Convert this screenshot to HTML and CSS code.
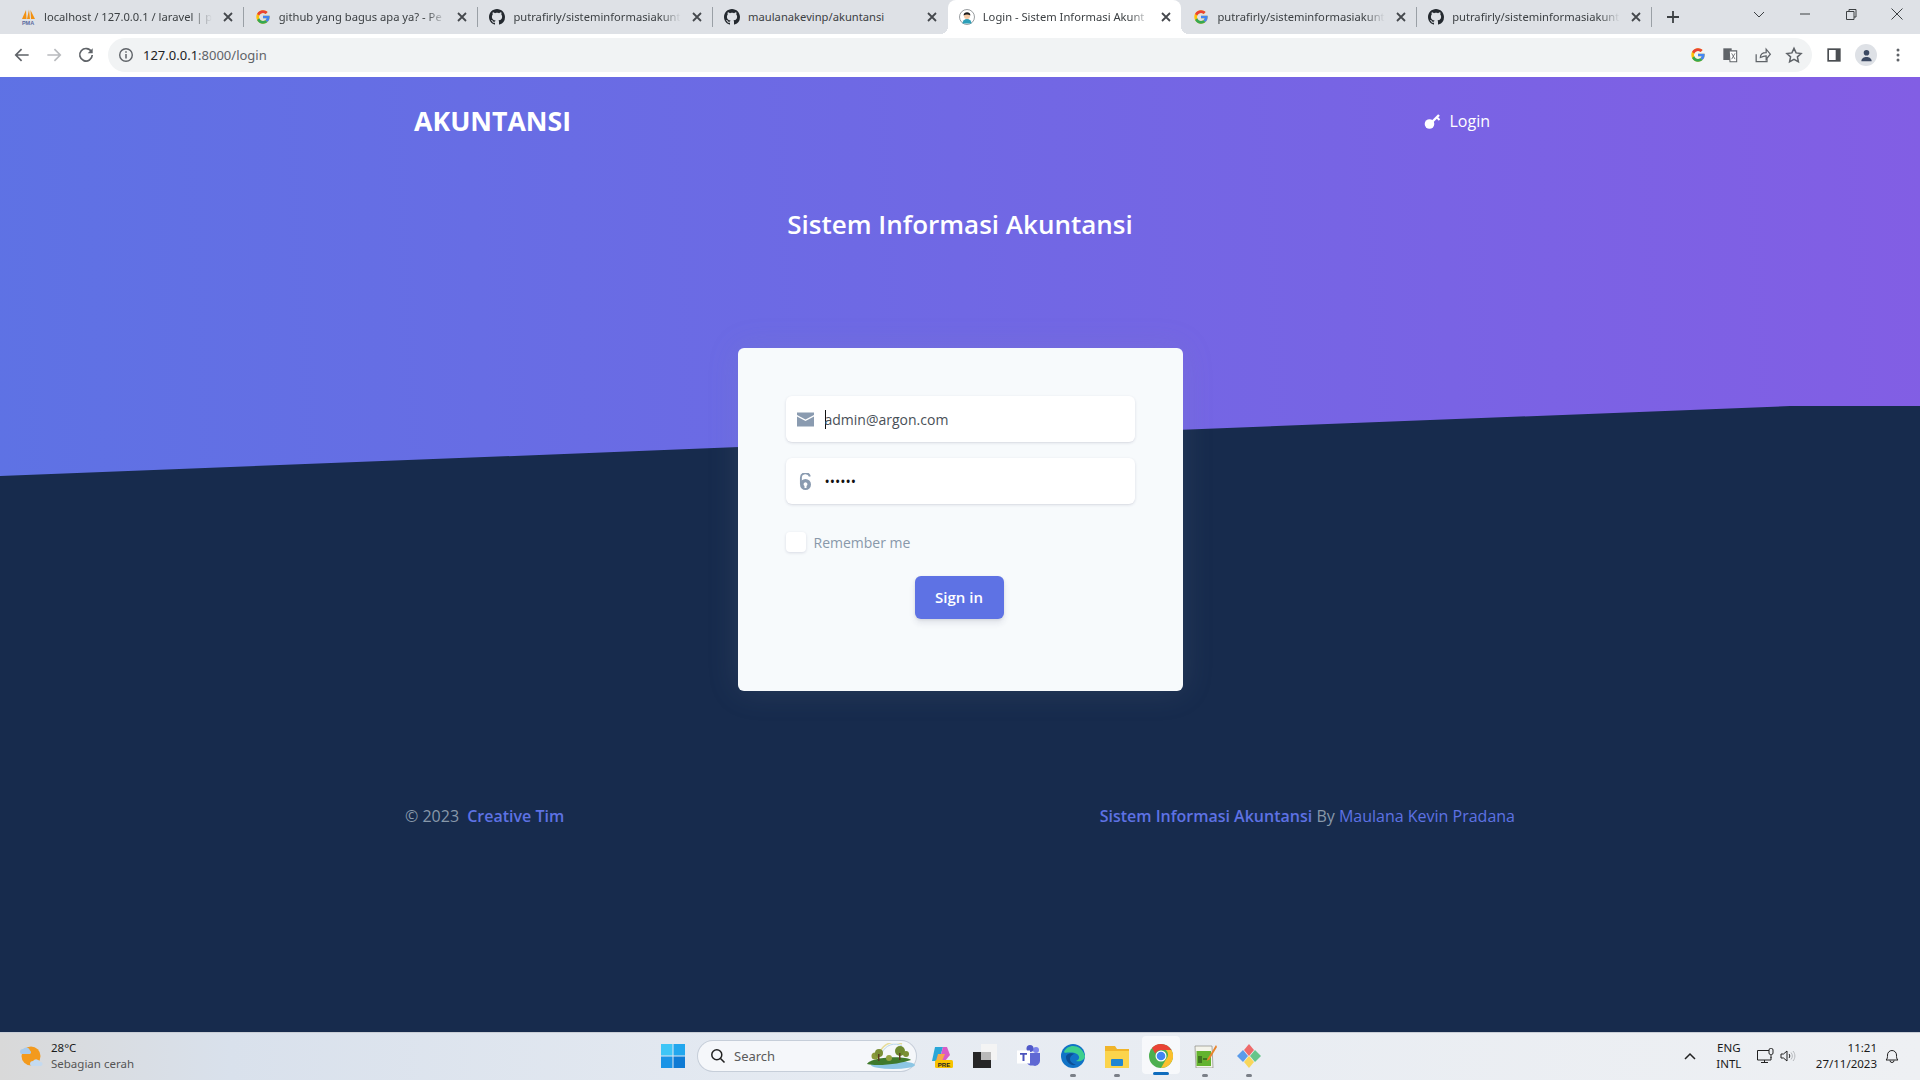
FILE: index.html
```html
<!DOCTYPE html>
<html lang="en">
<head>
    <meta charset="UTF-8">
    <title>Login - Sistem Informasi Akuntansi</title>
    <link rel="stylesheet" href="styles.css">
</head>
<body>
    <svg class="icon-defs" xmlns="http://www.w3.org/2000/svg">
        <symbol id="g-logo" viewBox="0 0 48 48">
            <path fill="#FFC107" d="M43.6 20.5H42V20H24v8h11.3c-1.6 4.7-6.1 8-11.3 8-6.6 0-12-5.4-12-12s5.4-12 12-12c3.1 0 5.8 1.2 8 3l5.7-5.7C34 6.1 29.3 4 24 4 13 4 4 13 4 24s9 20 20 20 20-9 20-20c0-1.3-.1-2.4-.4-3.5z"/>
            <path fill="#EA4335" d="M6.3 14.7l6.6 4.8C14.7 15.1 19 12 24 12c3.1 0 5.8 1.2 8 3l5.7-5.7C34 6.1 29.3 4 24 4 16.3 4 9.7 8.3 6.3 14.7z"/>
            <path fill="#34A853" d="M24 44c5.2 0 9.9-2 13.4-5.2l-6.2-5.2C29.2 35.1 26.7 36 24 36c-5.2 0-9.6-3.3-11.3-8l-6.5 5C9.5 39.6 16.2 44 24 44z"/>
            <path fill="#4285F4" d="M43.6 20.5H42V20H24v8h11.3c-.8 2.2-2.2 4.2-4.1 5.6l6.2 5.2C37 39.2 44 34 44 24c0-1.3-.1-2.4-.4-3.5z"/>
        </symbol>
        <symbol id="github" viewBox="0 0 16 16">
            <path fill="#24292f" d="M8 0C3.58 0 0 3.58 0 8c0 3.54 2.29 6.53 5.47 7.59.4.07.55-.17.55-.38 0-.19-.01-.82-.01-1.49-2.01.37-2.53-.49-2.69-.94-.09-.23-.48-.94-.82-1.13-.28-.15-.68-.52-.01-.53.63-.01 1.08.58 1.23.82.72 1.21 1.87.87 2.33.66.07-.52.28-.87.51-1.07-1.78-.2-3.64-.89-3.64-3.95 0-.87.31-1.59.82-2.15-.08-.2-.36-1.02.08-2.12 0 0 .67-.21 2.2.82.64-.18 1.32-.27 2-.27s1.36.09 2 .27c1.53-1.04 2.2-.82 2.2-.82.44 1.1.16 1.92.08 2.12.51.56.82 1.27.82 2.15 0 3.07-1.87 3.75-3.65 3.95.29.25.54.73.54 1.48 0 1.07-.01 1.93-.01 2.2 0 .21.15.46.55.38A8.01 8.01 0 0 0 16 8c0-4.42-3.58-8-8-8z"/>
        </symbol>
        <symbol id="tab-close" viewBox="0 0 16 16">
            <path d="M4 4l8 8M12 4l-8 8" fill="none" stroke="#45484d" stroke-width="1.8"/>
        </symbol>
    </svg>

    <div class="browser">
        <div class="tab-strip">
            <div class="tab">
                <svg class="favicon" viewBox="0 0 16 16">
                    <path d="M2 10L6 1l.5 9zM7 10l2-9.500 1 9.500zM10.500 1l4.500 9h-4z" fill="#f29111"/>
                    <text class="pma-text" x="8" y="15.500">PMA</text>
                </svg>
                <span class="tab-title">localhost / 127.0.0.1 / laravel | p</span>
                <svg class="tab-x"><use href="#tab-close"/></svg>
            </div>
            <span class="tab-sep"></span>
            <div class="tab">
                <svg class="favicon"><use href="#g-logo"/></svg>
                <span class="tab-title">github yang bagus apa ya? - Pe</span>
                <svg class="tab-x"><use href="#tab-close"/></svg>
            </div>
            <span class="tab-sep"></span>
            <div class="tab">
                <svg class="favicon"><use href="#github"/></svg>
                <span class="tab-title">putrafirly/sisteminformasiakunt</span>
                <svg class="tab-x"><use href="#tab-close"/></svg>
            </div>
            <span class="tab-sep"></span>
            <div class="tab">
                <svg class="favicon"><use href="#github"/></svg>
                <span class="tab-title no-fade">maulanakevinp/akuntansi</span>
                <svg class="tab-x"><use href="#tab-close"/></svg>
            </div>
            <span class="tab-sep hidden"></span>
            <div class="tab active">
                <svg class="favicon" viewBox="0 0 16 16">
                    <circle cx="8" cy="8" r="7.500" fill="#fff" stroke="#6f7478" stroke-width=".7"/>
                    <path d="M3.500 14.500a4.500 4.500 0 0 1 9 0z" fill="#2c9fb8"/>
                    <circle cx="8" cy="7" r="3" fill="#f3c9a5"/>
                    <path d="M4.600 6.500C4.400 2.200 11.600 2 11.400 6.500 9.500 5 6.500 5 4.600 6.500z" fill="#1b1b1b"/>
                </svg>
                <span class="tab-title">Login - Sistem Informasi Akunt</span>
                <svg class="tab-x"><use href="#tab-close"/></svg>
            </div>
            <span class="tab-sep hidden"></span>
            <div class="tab">
                <svg class="favicon"><use href="#g-logo"/></svg>
                <span class="tab-title">putrafirly/sisteminformasiakunt</span>
                <svg class="tab-x"><use href="#tab-close"/></svg>
            </div>
            <span class="tab-sep"></span>
            <div class="tab">
                <svg class="favicon"><use href="#github"/></svg>
                <span class="tab-title">putrafirly/sisteminformasiakunt</span>
                <svg class="tab-x"><use href="#tab-close"/></svg>
            </div>
            <span class="tab-sep"></span>
            <svg class="new-tab" viewBox="0 0 16 16"><path d="M8 2v12M2 8h12" stroke="#3c4043" stroke-width="1.800"/></svg>
            <div class="window-controls">
                <svg class="win-btn" viewBox="0 0 16 16"><path d="M3 6l5 5 5-5" fill="none" stroke="#3c4043"/></svg>
                <svg class="win-btn" viewBox="0 0 16 16"><path d="M3 8h10" stroke="#3c4043"/></svg>
                <svg class="win-btn" viewBox="0 0 16 16"><path d="M3.500 5.500h7.500v8h-7.500zM6 5.500V3.500h7v7.500h-2" fill="none" stroke="#3c4043"/></svg>
                <svg class="win-btn" viewBox="0 0 16 16"><path d="M2.500 2.500l11 11M13.500 2.500l-11 11" stroke="#3c4043"/></svg>
            </div>
        </div>

        <div class="toolbar">
            <svg class="tool" viewBox="0 0 24 24"><path d="M20 12H5M11.500 5l-7 7 7 7" fill="none" stroke="#5f6368" stroke-width="2"/></svg>
            <svg class="tool" viewBox="0 0 24 24"><path d="M4 12h15M12.500 5l7 7-7 7" fill="none" stroke="#b9bbbe" stroke-width="2"/></svg>
            <svg class="tool" viewBox="0 0 24 24"><path d="M18.500 8A7.500 7.500 0 1 0 19.500 12" fill="none" stroke="#5f6368" stroke-width="2"/><path d="M20 4v6h-6z" fill="#5f6368"/></svg>
            <div class="address-bar">
                <svg class="info-icon" viewBox="0 0 16 16">
                    <circle cx="8" cy="8" r="6.300" fill="none" stroke="#5f6368" stroke-width="1.400"/>
                    <path d="M8 7v4.500M8 4.300v1.500" stroke="#5f6368" stroke-width="1.500"/>
                </svg>
                <span class="url">127.0.0.1<span class="url-rest">:8000/login</span></span>
                <svg class="tool"><use href="#g-logo" x="8" y="2" width="16" height="16"/></svg>
                <svg class="tool" viewBox="0 0 24 24">
                    <rect x="4" y="4" width="10" height="14" fill="#5f6368"/>
                    <path d="M11 7h9v13h-8z" fill="#fff" stroke="#5f6368" stroke-width="1.300"/>
                    <path d="M14 10l4 7M18 10l-4 7" stroke="#5f6368"/>
                </svg>
                <svg class="tool" viewBox="0 0 24 24"><path d="M5 11v9h13v-5M10 15c0-4 3-6 7-6V5l5 6-5 6v-4c-3 0-5 1-7 2z" fill="none" stroke="#5f6368" stroke-width="1.500"/></svg>
                <svg class="tool" viewBox="0 0 24 24"><path d="M12 4l2.500 5.500 6 .7-4.400 4 1.200 5.900L12 17.200 6.700 20.100l1.200-5.900-4.400-4 6-.7z" fill="none" stroke="#5f6368" stroke-width="1.800"/></svg>
            </div>
            <svg class="tool" viewBox="0 0 24 24"><rect x="4" y="4" width="16" height="16" fill="#4b4e52"/><rect x="6" y="6" width="8" height="12" fill="#fff"/></svg>
            <div class="profile-slot">
                <span class="profile">
                    <svg viewBox="0 0 16 16"><circle cx="8" cy="5" r="3" fill="#3c4a63"/><path d="M2.500 14c0-6 11-6 11 0z" fill="#3c4a63"/></svg>
                </span>
            </div>
            <svg class="tool" viewBox="0 0 24 24"><circle cx="12" cy="6" r="1.800" fill="#5f6368"/><circle cx="12" cy="12" r="1.800" fill="#5f6368"/><circle cx="12" cy="18" r="1.800" fill="#5f6368"/></svg>
        </div>
    </div>

    <main class="page">
        <nav class="navbar">
            <a class="brand">AKUNTANSI</a>
            <a class="nav-login">
                <svg class="key-icon" viewBox="0 0 18 18">
                    <circle cx="5.500" cy="12" r="4.800" fill="#fff"/>
                    <path d="M7.500 10.500L15 3" stroke="#fff" stroke-width="2.400"/>
                    <path d="M13 5.500l2.500 2.500" stroke="#fff" stroke-width="2"/>
                </svg>
                Login
            </a>
        </nav>

        <h1 class="title">Sistem Informasi Akuntansi</h1>

        <section class="login-card">
            <form class="login-form">
                <label class="field">
                    <svg class="field-icon" viewBox="0 0 17 14">
                        <path d="M0 0h17v2.500L8.500 7 0 2.500z" fill="#8a9bb0"/>
                        <path d="M0 4l8.500 4.500L17 4v10H0z" fill="#8a9bb0"/>
                    </svg>
                    <span class="caret"></span>
                    <input type="text" value="admin@argon.com">
                </label>
                <label class="field">
                    <svg class="field-icon" viewBox="0 0 17 17">
                        <path d="M3.900 11V4.800a4.600 4.600 0 0 1 9-1.300" fill="none" stroke="#8a9bb0" stroke-width="1.900"/>
                        <path fill-rule="evenodd" d="M8.500 6a5.500 5.500 0 1 1 0 11 5.500 5.500 0 0 1 0-11zM8.500 9.200a2 2 0 0 0-1 3.700V15h2v-2.100a2 2 0 0 0-1-3.700z" fill="#8a9bb0"/>
                    </svg>
                    <input class="password" type="password" value="secret">
                </label>
                <div class="remember">
                    <span class="checkbox"></span>
                    <span>Remember me</span>
                </div>
                <button type="button" class="btn-signin">Sign in</button>
            </form>
        </section>

        <footer class="footer">
            <div class="copyright">© 2023 <a class="footer-strong">Creative Tim</a></div>
            <div class="credit"><a class="footer-strong">Sistem Informasi Akuntansi</a> By <a class="footer-link">Maulana Kevin Pradana</a></div>
        </footer>
    </main>

    <div class="taskbar">
        <div class="weather">
            <svg class="weather-icon" viewBox="0 0 24 24">
                <circle cx="12" cy="12" r="9.500" fill="#f39a1d"/>
                <path d="M1 8a3 3 0 0 1 3-3 4 4 0 0 1 7 1.500A2 2 0 0 1 11 10H2.500A2 2 0 0 1 1 8z" fill="#a9cbec"/>
                <path d="M11 20a3 3 0 0 1 3-3 4 4 0 0 1 7 1 2 2 0 0 1 1 4H12.500A2 2 0 0 1 11 20z" fill="#c4daf0"/>
            </svg>
            <div class="weather-text">
                <span class="temp">28°C</span>
                <span class="sky">Sebagian cerah</span>
            </div>
        </div>

        <div class="task-center">
            <svg class="start" viewBox="0 0 24 24">
                <rect x="0" y="0" width="11.500" height="11.500" fill="#3ec6f7"/>
                <rect x="12.500" y="0" width="11.500" height="11.500" fill="#22a7ee"/>
                <rect x="0" y="12.500" width="11.500" height="11.500" fill="#1a94e6"/>
                <rect x="12.500" y="12.500" width="11.500" height="11.500" fill="#0f7bd4"/>
            </svg>
            <div class="search-pill">
                <svg class="search-icon" viewBox="0 0 16 16"><circle cx="6.800" cy="6.800" r="5" fill="none" stroke="#202020" stroke-width="1.500"/><path d="M10.500 10.500l4 4" stroke="#202020" stroke-width="1.600"/></svg>
                <span class="search-label">Search</span>
                <svg class="search-art" viewBox="0 0 49 26">
                    <path d="M14 9a16 16 0 0 1 22-8" fill="none" stroke="#e6dc9a" stroke-width="1.500"/>
                    <path d="M16 10a14 14 0 0 1 20-7" fill="none" stroke="#b9d6ea" stroke-width="1"/>
                    <ellipse cx="27" cy="22" rx="22" ry="4" fill="#8cc6e4"/>
                    <path d="M1 21c3-7 38-9 44-4-8 3-32 7-44 4z" fill="#3f7a2c"/>
                    <circle cx="9" cy="13" r="3.500" fill="#8a9a3a"/>
                    <circle cx="13" cy="10" r="4" fill="#7a8f35"/>
                    <circle cx="34" cy="8" r="5" fill="#6f8a30"/>
                    <circle cx="40" cy="11" r="3" fill="#7a8f35"/>
                    <circle cx="23" cy="15" r="3" fill="#93a23f"/>
                    <path d="M12 11h1.500v7H12zM33 10h1.500v7H33z" fill="#5b3c1e"/>
                </svg>
            </div>
            <div class="task-apps">
                <div class="task-app">
                    <svg viewBox="0 0 24 24">
                        <path d="M6 3h8l-4 14H3z" fill="#2aa7d8"/>
                        <path d="M14 3h4l3 8-5 6h-6z" fill="#d85bc7"/>
                        <path d="M9 10h7l-3 7H7z" fill="#f6a94a"/>
                        <rect x="6" y="16" width="18" height="8" rx="1.500" fill="#f8c300"/>
                        <text class="pre-text" x="15" y="22.500">PRE</text>
                    </svg>
                </div>
                <div class="task-app">
                    <svg viewBox="0 0 24 24">
                        <rect x="8" y="0" width="16" height="16" fill="#f4f4f4"/>
                        <rect x="0" y="8" width="18" height="16" fill="#262626"/>
                        <rect x="8" y="8" width="10" height="8" fill="#b9b9b9"/>
                    </svg>
                </div>
                <div class="task-app">
                    <svg viewBox="0 0 24 24">
                        <circle cx="19" cy="6" r="3" fill="#7b83eb"/>
                        <circle cx="13" cy="4.500" r="3.500" fill="#5059c9"/>
                        <path d="M8 9h15v8a5 5 0 0 1-7 4.500A6 6 0 0 1 9 17z" fill="#5f68d3"/>
                        <rect x="0" y="6.500" width="13" height="13" fill="#fff"/>
                        <path d="M3 9h7v1.800H7.500V17H5.500v-6.200H3z" fill="#4b53bc"/>
                    </svg>
                </div>
                <div class="task-app running">
                    <svg viewBox="0 0 24 24">
                        <circle cx="12" cy="12" r="12" fill="#1173c6"/>
                        <path d="M3 8C6 0 20-1 24 12c0 4-5 6-9 5 4-1 4-5 1-7C11 7 3 10 3 8z" fill="#3ecf8e"/>
                        <path d="M5 13c0 5 5 9 9 8 3-.5-5-1-5-6 0-3 3-5 5-5-4-2-9 0-9 3z" fill="#0c4f96"/>
                    </svg>
                </div>
                <div class="task-app running">
                    <svg viewBox="0 0 24 24">
                        <path d="M0 2h10l2 3h12v19H0z" fill="#f0b429"/>
                        <path d="M0 7h24v17H0z" fill="#fbd44c"/>
                        <rect x="6" y="15" width="12" height="7" rx="1" fill="#1f86d2"/>
                    </svg>
                </div>
                <div class="task-app active-app">
                    <svg viewBox="0 0 24 24">
                        <circle cx="12" cy="12" r="12" fill="#4caf50"/>
                        <path d="M12 0a12 12 0 0 1 10.400 6H12a6 6 0 0 0-5.600 3.700L3 3.900A12 12 0 0 1 12 0z" fill="#ea4335"/>
                        <path d="M22.400 6A12 12 0 0 1 12 24l5.200-9a6 6 0 0 0-.4-9z" fill="#fbc02d"/>
                        <circle cx="12" cy="12" r="5.500" fill="#fff"/>
                        <circle cx="12" cy="12" r="4.300" fill="#4285f4"/>
                    </svg>
                    <span class="active-mark"></span>
                </div>
                <div class="task-app running">
                    <svg viewBox="0 0 24 24">
                        <path d="M2 2h17l1 22H3z" fill="#f3f3ea" stroke="#7a7a70" stroke-width=".6"/>
                        <rect x="3.500" y="7" width="14.500" height="15" fill="#63b32e"/>
                        <path d="M6 12v7M8 12v7M10 15h4" stroke="#1f3a12"/>
                        <path d="M23 1l-8 13-1.500 3 3-1.500L24 3z" fill="#e8842c"/>
                    </svg>
                </div>
                <div class="task-app running">
                    <svg viewBox="0 0 24 24">
                        <path d="M12 0l5 6-5 6-5-6z" fill="#ee6a6a"/>
                        <path d="M18 6l6 6-6 6-5-6z" fill="#66c58a"/>
                        <path d="M6 6l5 6-5 6-6-6z" fill="#5a9bea"/>
                        <path d="M12 12l5 6-5 6-5-6z" fill="#f8d65a"/>
                    </svg>
                </div>
            </div>
        </div>

        <div class="tray">
            <svg class="tray-chevron" viewBox="0 0 12 8"><path d="M1 7l5-5 5 5" fill="none" stroke="#222" stroke-width="1.500"/></svg>
            <div class="lang"><span>ENG</span><span>INTL</span></div>
            <svg class="tray-net" viewBox="0 0 18 16">
                <path d="M12 2.500H.500v9.500H14V9M4 14.500h7M7.500 12v2.500" fill="none" stroke="#222"/>
                <rect x="12" y=".5" width="4" height="6" rx="1.500" fill="none" stroke="#222"/>
                <path d="M14 7v3" stroke="#222"/>
            </svg>
            <svg class="tray-sound" viewBox="0 0 16 14">
                <path d="M1 5h2.500L7 2v10L3.500 9H1z" fill="none" stroke="#222"/>
                <path d="M9 5c1 1 1 3 0 4" fill="none" stroke="#222"/>
                <path d="M11 3.500c1.800 2 1.800 5 0 7M13 2c2.500 3 2.500 7 0 10" fill="none" stroke="#b5b8bc"/>
            </svg>
            <div class="clock"><span>11:21</span><span>27/11/2023</span></div>
            <svg class="tray-bell" viewBox="0 0 14 16">
                <path d="M1 12c1.500-1 1.500-3 1.500-5a4.500 4.500 0 0 1 9 0c0 2 0 4 1.500 5zM5 12.500a2 2 0 0 0 4 0" fill="none" stroke="#222"/>
            </svg>
        </div>
    </div>
</body>
</html>
```

FILE: styles.css
```css
* {
    margin: 0;
    padding: 0;
    box-sizing: border-box;
}

html, body {
    height: 100%;
}

body {
    font-family: "Open Sans", sans-serif;
    display: flex;
    flex-direction: column;
    overflow: hidden;
}

.icon-defs {
    display: none;
}

/* browser chrome */
.browser {
    height: 77px;
    flex-shrink: 0;
    font-family: "Noto Sans", sans-serif;
}

.tab-strip {
    height: 34px;
    background: #dee1e6;
    display: flex;
    align-items: center;
    padding-left: 9px;
}

.tab {
    position: relative;
    width: 233.7px;
    height: 34px;
    display: flex;
    align-items: center;
    padding: 0 7px 0 11px;
    font-size: 11.2px;
    color: #3c4043;
}

.tab.active {
    background: #fff;
    border-radius: 8px 8px 0 0;
}

.tab.active::before,
.tab.active::after {
    content: "";
    position: absolute;
    bottom: 0;
    width: 8px;
    height: 8px;
}

.tab.active::before {
    left: -8px;
    background: radial-gradient(circle at 0 0, transparent 8px, #fff 8px);
}

.tab.active::after {
    right: -8px;
    background: radial-gradient(circle at 100% 0, transparent 8px, #fff 8px);
}

.favicon {
    width: 16px;
    height: 16px;
    flex-shrink: 0;
    margin-right: 8px;
}

.pma-text {
    font-family: "Liberation Sans", sans-serif;
    font-size: 5.5px;
    font-weight: 700;
    text-anchor: middle;
    fill: #5a6a9f;
}

.tab-title {
    flex: 1;
    padding-bottom: 1px;
    white-space: nowrap;
    overflow: hidden;
    -webkit-mask-image: linear-gradient(90deg, #000 88%, transparent 100%);
    mask-image: linear-gradient(90deg, #000 88%, transparent 100%);
}

.tab-title.no-fade {
    -webkit-mask-image: none;
    mask-image: none;
}

.tab-x {
    width: 16px;
    height: 16px;
    flex-shrink: 0;
    margin-left: 8px;
}

.tab-sep {
    width: 1px;
    height: 20px;
    background: #9aa0a6;
    flex-shrink: 0;
}

.tab-sep.hidden {
    visibility: hidden;
}

.new-tab {
    width: 16px;
    height: 16px;
    margin-left: 13px;
}

.window-controls {
    margin-left: auto;
    display: flex;
    align-items: center;
    padding-right: 15px;
    gap: 30px;
}

.win-btn {
    width: 16px;
    height: 16px;
    margin-bottom: 6px;
}

.toolbar {
    height: 43px;
    background: #fff;
    display: flex;
    align-items: center;
    padding: 0 6px 1px;
}

.tool {
    width: 32px;
    height: 20px;
    flex-shrink: 0;
}

.address-bar {
    flex: 1;
    height: 34px;
    margin: 0 6px;
    background: #f1f3f4;
    border-radius: 17px;
    display: flex;
    align-items: center;
    padding: 0 2px 0 10px;
}

.info-icon {
    width: 16px;
    height: 16px;
    margin-right: 9px;
}

.url {
    flex: 1;
    font-size: 13px;
    color: #202124;
}

.url-rest {
    color: #5f6368;
}

.profile-slot {
    width: 32px;
    display: flex;
    justify-content: center;
}

.profile {
    width: 22px;
    height: 22px;
    border-radius: 50%;
    background: #dee1e6;
    display: flex;
    align-items: center;
    justify-content: center;
}

.profile svg {
    width: 15px;
    height: 15px;
}

/* login page */
.page {
    position: relative;
    flex: 1;
    background: #172b4d;
    display: flex;
    flex-direction: column;
}

.page::before {
    content: "";
    position: absolute;
    top: 0;
    left: 0;
    width: 100%;
    height: 399px;
    background: linear-gradient(87deg, #5e72e4 0, #825ee4 100%);
    clip-path: polygon(0 0, 100% 0, 100% 329px, 1790px 329px, 0 399px);
}

.navbar,
.title,
.login-card,
.footer {
    position: relative;
}

.navbar {
    width: 1140px;
    height: 87px;
    margin: 0 auto;
    padding: 0 40px 0 24px;
    display: flex;
    align-items: center;
    justify-content: space-between;
}

.brand {
    font-size: 26.7px;
    font-weight: 700;
    color: #fff;
}

.nav-login {
    display: flex;
    align-items: center;
    gap: 7px;
    font-size: 16px;
    color: #fff;
}

.key-icon {
    width: 18px;
    height: 18px;
}

.title {
    margin-top: 42px;
    font-size: 26px;
    line-height: 36px;
    font-weight: 600;
    color: #fff;
    text-align: center;
}

.login-card {
    width: 445px;
    margin: 106px auto 0;
    padding: 48px 48px 72px;
    background: #f7fafc;
    border-radius: 6px;
    box-shadow: 0 0 32px rgba(136, 152, 170, 0.15);
}

.login-form {
    display: flex;
    flex-direction: column;
}

.field {
    height: 46px;
    margin-bottom: 16px;
    padding-left: 11px;
    background: #fff;
    border-radius: 6px;
    box-shadow: 0 1px 3px rgba(50, 50, 93, 0.15), 0 1px 0 rgba(0, 0, 0, 0.02);
    display: flex;
    align-items: center;
}

.field-icon {
    width: 17px;
    height: 17px;
    margin-right: 11px;
    flex-shrink: 0;
}

.caret {
    width: 1px;
    height: 19px;
    margin-right: -1px;
    background: #111;
}

.field input {
    flex: 1;
    min-width: 0;
    border: none;
    outline: none;
    background: transparent;
    font-family: inherit;
    font-size: 14px;
    color: #495057;
}

.field input.password {
    color: #111;
}

.remember {
    margin-top: 12px;
    display: flex;
    align-items: center;
    gap: 8px;
    font-size: 14px;
    color: #8898aa;
}

.checkbox {
    width: 20px;
    height: 20px;
    background: #fff;
    border-radius: 4px;
    box-shadow: 0 1px 3px rgba(50, 50, 93, 0.15);
}

.btn-signin {
    align-self: flex-start;
    width: 89px;
    height: 43px;
    margin: 24px 0 0 129px;
    padding-bottom: 2px;
    border: none;
    border-radius: 6px;
    background: #5e72e4;
    color: #fff;
    font-family: inherit;
    font-size: 15px;
    font-weight: 600;
    box-shadow: 0 4px 6px rgba(50, 50, 93, 0.11), 0 1px 3px rgba(0, 0, 0, 0.08);
}

.footer {
    width: 1110px;
    margin: 113px auto 0;
    display: flex;
    justify-content: space-between;
    font-size: 16px;
    line-height: 24px;
    color: #8898aa;
}

.footer-strong {
    margin-left: 4px;
    font-weight: 600;
    color: #5e72e4;
}

.credit .footer-strong {
    margin-left: 0;
}

.footer-link {
    color: #5e72e4;
}

/* windows taskbar */
.taskbar {
    height: 48px;
    flex-shrink: 0;
    background: linear-gradient(90deg, #d9d9d9 0, #d9e1ec 12%, #e6ebf2 45%, #eef0f3 100%);
    border-top: 1px solid #c9ced6;
    display: flex;
    align-items: center;
    padding-bottom: 2px;
    font-family: "Noto Sans", sans-serif;
}

.weather {
    width: 660.5px;
    display: flex;
    align-items: center;
    padding-left: 19px;
    gap: 8px;
}

.weather-icon {
    width: 24px;
    height: 24px;
}

.weather-text {
    display: flex;
    flex-direction: column;
    font-size: 11.5px;
    line-height: 16px;
}

.temp {
    color: #1a1a1a;
}

.sky {
    color: #555;
}

.task-center {
    display: flex;
    align-items: center;
}

.start {
    width: 24px;
    height: 24px;
}

.search-pill {
    width: 218px;
    height: 30px;
    margin-left: 13.5px;
    border-radius: 15px;
    background: #f5f7fa;
    box-shadow: 0 0 0 1px #c6ced9;
    display: flex;
    align-items: center;
    padding-left: 12px;
}

.search-icon {
    width: 16px;
    height: 16px;
}

.search-label {
    margin-left: 8px;
    font-size: 13px;
    color: #5a5a5a;
}

.search-art {
    width: 49px;
    height: 26px;
    margin-left: auto;
    margin-right: 1px;
}

.task-apps {
    display: flex;
    margin-left: 3px;
}

.task-app {
    position: relative;
    width: 44px;
    height: 40px;
    display: flex;
    align-items: center;
    justify-content: center;
}

.task-app svg {
    width: 24px;
    height: 24px;
}

.pre-text {
    font-family: "Liberation Sans", sans-serif;
    font-size: 6px;
    font-weight: 700;
    text-anchor: middle;
    fill: #222;
}

.task-app.running::after {
    content: "";
    position: absolute;
    bottom: -1px;
    left: 19px;
    width: 6px;
    height: 3px;
    border-radius: 2px;
    background: #7a7f87;
}

.active-app::before {
    content: "";
    position: absolute;
    top: 0;
    left: 3px;
    width: 38px;
    height: 38px;
    border-radius: 4px;
    background: rgba(255, 255, 255, 0.65);
}

.active-app svg {
    position: relative;
}

.active-mark {
    position: absolute;
    bottom: 1px;
    left: 14px;
    width: 16px;
    height: 3px;
    border-radius: 2px;
    background: #0f6cbd;
}

.tray {
    margin-left: auto;
    display: flex;
    align-items: center;
    padding-right: 21px;
    font-size: 11.5px;
    color: #1a1a1a;
}

.tray-chevron {
    width: 12px;
    height: 8px;
}

.lang {
    margin-left: 20px;
    display: flex;
    flex-direction: column;
    align-items: center;
    line-height: 16px;
}

.tray-net {
    width: 18px;
    height: 16px;
    margin-left: 16px;
}

.tray-sound {
    width: 16px;
    height: 14px;
    margin-left: 5px;
}

.clock {
    margin-left: 19.5px;
    display: flex;
    flex-direction: column;
    align-items: flex-end;
    line-height: 16px;
}

.tray-bell {
    width: 14px;
    height: 16px;
    margin-left: 8px;
}
```
